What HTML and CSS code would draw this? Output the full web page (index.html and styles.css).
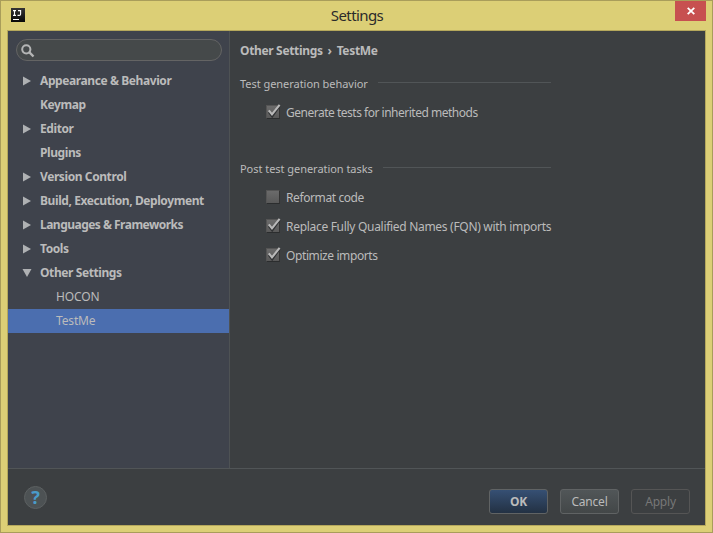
FILE: index.html
```html
<!DOCTYPE html>
<html lang="en">
<head>
<meta charset="utf-8">
<title>Settings</title>
<link rel="stylesheet" href="styles.css">
</head>
<body>
<div class="window">
  <header class="titlebar">
    <svg class="app-icon" width="14" height="14" viewBox="0 0 14 14">
      <defs><linearGradient id="app" x1="0" y1="0" x2="0" y2="1"><stop offset="0" stop-color="#353535"/><stop offset="1" stop-color="#080808"/></linearGradient></defs>
      <rect width="14" height="14" fill="url(#app)"/>
      <path d="M2 2.6h3M3.5 2.6v5M2 7.4h3M7 2.6h2.6v3.4q0 1.4-1.4 1.4H6.5M2 11.5h6" fill="none" stroke="#fff" stroke-width="1.1"/>
    </svg>
    <h1 class="title">Settings</h1>
    <button class="close" aria-label="Close">
      <svg width="8" height="8" viewBox="0 0 8 8"><path d="M.7.8l6.6 6.4M7.3.8L.7 7.2" stroke="#fff" stroke-width="1.8"/></svg>
    </button>
  </header>
  <div class="client">
    <div class="body">
      <nav class="sidebar">
        <div class="search">
          <svg width="14" height="14" viewBox="0 0 14 14" fill="none" stroke="#b4b5b5"><circle cx="5.3" cy="5.3" r="4.1" stroke-width="2"/><path d="M8.2 8.2l4.3 4.3" stroke-width="2.4"/></svg>
        </div>
        <ul class="tree">
          <li class="row"><i class="arrow"></i><span>Appearance &amp; Behavior</span></li>
          <li class="row"><i class="blank"></i><span>Keymap</span></li>
          <li class="row"><i class="arrow"></i><span>Editor</span></li>
          <li class="row"><i class="blank"></i><span>Plugins</span></li>
          <li class="row"><i class="arrow"></i><span>Version Control</span></li>
          <li class="row"><i class="arrow"></i><span>Build, Execution, Deployment</span></li>
          <li class="row"><i class="arrow"></i><span class="tight">Languages &amp; Frameworks</span></li>
          <li class="row"><i class="arrow"></i><span>Tools</span></li>
          <li class="row"><i class="arrow open"></i><span>Other Settings</span></li>
          <li class="row child"><span>HOCON</span></li>
          <li class="row child selected"><span>TestMe</span></li>
        </ul>
      </nav>
      <main class="content">
        <h2 class="crumbs"><span>Other Settings</span><span class="sep">›</span><span>TestMe</span></h2>
        <section class="group">
          <h3 class="legend"><span>Test generation behavior</span></h3>
          <div class="option"><span class="box"><svg class="check" width="15" height="15" viewBox="0 0 15 15"><path d="M3 8l3.2 4.2L13.4 2" fill="none" stroke="#303234" stroke-width="2.4"/><path d="M2.8 6.3L6 10.4 13.6 .9" fill="none" stroke="#b9b9b9" stroke-width="2.1"/></svg></span><span class="tight">Generate tests for inherited methods</span></div>
        </section>
        <section class="group second">
          <h3 class="legend"><span>Post test generation tasks</span></h3>
          <div class="option"><span class="box"></span><span>Reformat code</span></div>
          <div class="option"><span class="box"><svg class="check" width="15" height="15" viewBox="0 0 15 15"><path d="M3 8l3.2 4.2L13.4 2" fill="none" stroke="#303234" stroke-width="2.4"/><path d="M2.8 6.3L6 10.4 13.6 .9" fill="none" stroke="#b9b9b9" stroke-width="2.1"/></svg></span><span class="wide">Replace Fully Qualified Names (FQN) with imports</span></div>
          <div class="option"><span class="box"><svg class="check" width="15" height="15" viewBox="0 0 15 15"><path d="M3 8l3.2 4.2L13.4 2" fill="none" stroke="#303234" stroke-width="2.4"/><path d="M2.8 6.3L6 10.4 13.6 .9" fill="none" stroke="#b9b9b9" stroke-width="2.1"/></svg></span><span>Optimize imports</span></div>
        </section>
      </main>
    </div>
    <footer class="footer">
      <button class="help">?</button>
      <button class="btn primary">OK</button>
      <button class="btn">Cancel</button>
      <button class="btn disabled">Apply</button>
    </footer>
  </div>
</div>
</body>
</html>
```
FILE: styles.css
```css
* { box-sizing: border-box; }
body { margin: 0; font: 12px/16px "Noto Sans", "Open Sans", sans-serif; color: #bbb; }
h1, h2, h3, ul { margin: 0; padding: 0; font-size: inherit; list-style: none; }
button { font: inherit; padding: 0; }
svg { display: block; }
.window { width: 713px; height: 533px; background: #dccf76; border: 1px solid #a99d5a; padding: 0 6px 6px; display: flex; flex-direction: column; }
.titlebar { height: 29px; flex: none; display: flex; align-items: flex-start; padding: 0 0 0 4px; }
.app-icon { margin-top: 7px; }
.title { flex: 1; text-align: center; font-size: 15px; font-weight: 400; line-height: 20px; margin-top: 4px; padding-left: 14px; color: #2b2b2b; letter-spacing: -.6px; }
.close { width: 31px; height: 20px; border: 0; background: #c75050; display: flex; align-items: center; justify-content: center; }
.client { flex: 1; border: 1px solid #b5a85c; background: #3c3f41; display: flex; flex-direction: column; }
.body { height: 437px; display: flex; }
.sidebar { width: 222px; flex: none; background: #3f434c; border-right: 1px solid #4e5254; padding-top: 8px; }
.search { margin: 0 7px 8px 8px; height: 22px; border: 1px solid #646464; border-radius: 11px; background: #45494a; padding: 4px 0 0 4px; }
.row { height: 24px; display: flex; align-items: center; font-weight: 700; padding-left: 14px; white-space: nowrap; letter-spacing: -.41px; }
.row .tight { letter-spacing: -.52px; }
.arrow, .blank { width: 10px; height: 10px; margin-right: 8px; }
.arrow { background: #afb1b3; clip-path: polygon(10% 5%, 90% 50%, 10% 95%); }
.arrow.open { clip-path: polygon(5% 10%, 95% 10%, 50% 90%); }
.child { padding-left: 48px; font-weight: 400; letter-spacing: -.15px; }
.selected { background: #4b6eaf; }
.content { padding: 12px 0 0 10px; width: 321px; }
.crumbs { display: flex; letter-spacing: -.34px; }
.sep { margin: 0 5px; }
.group { margin-top: 17px; }
.second { margin-top: 34px; }
.legend { display: flex; font-size: 11px; font-weight: 400; white-space: nowrap; margin-bottom: 6px; letter-spacing: -.04px; }
.legend::after { content: ""; flex: 1; height: 1px; background: #515557; margin: 6px 0 0 10px; }
.option { height: 29px; display: flex; align-items: center; padding-left: 26px; white-space: nowrap; letter-spacing: -.4px; }
.option .tight { letter-spacing: -.49px; }
.option .wide { letter-spacing: -.3px; }
.box { width: 14px; height: 14px; flex: none; margin: -1px 6px 0 0; border: 1px solid #555; border-right-color: #333; border-bottom-color: #2b2d2e; background: linear-gradient(#6b6b6b, #595959); position: relative; }
.check { position: absolute; left: -1px; top: -2px; }
.footer { flex: 1; border-top: 1px solid #515557; display: flex; align-items: flex-start; padding: 20px 15px 0 16px; gap: 12px; }
.help { width: 23px; height: 23px; margin: -3px auto 0 0; border: 1px solid #5c6061; border-radius: 50%; background: #4d5254; color: #4a9bc9; font: 700 18px/21px "Noto Sans", sans-serif; }
.btn { width: 59px; height: 25px; border: 1px solid #606364; border-radius: 3px; background: linear-gradient(#515658, #434748); color: #bbb; letter-spacing: -.2px; }
.primary { background: linear-gradient(#365074, #233143); font-weight: 700; }
.disabled { background: none; color: #777; border-color: #555; }
```
